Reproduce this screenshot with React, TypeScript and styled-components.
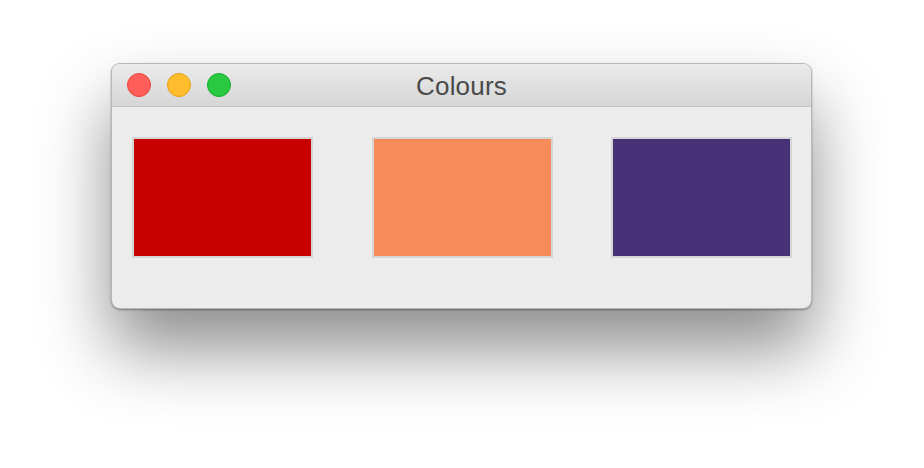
import styled, { createGlobalStyle } from "styled-components";

const GlobalStyle = createGlobalStyle`
  html, body {
    margin: 0;
    padding: 0;
    background: #ffffff;
  }
  body {
    font-family: "Liberation Sans", Arial, sans-serif;
  }
`;

const Desktop = styled.div`
  width: 924px;
  height: 468px;
  box-sizing: border-box;
  padding: 63px 0 0 111px;
  display: flex;
  align-items: flex-start;
`;

const Window = styled.div`
  width: 701px;
  border-radius: 9px;
  background: #ececec;
  border: 1px solid rgba(0, 0, 0, 0.22);
  box-sizing: border-box;
  overflow: hidden;
  box-shadow:
    0 1px 2px rgba(0, 0, 0, 0.35),
    0 40px 70px rgba(0, 0, 0, 0.45);
`;

const TitleBar = styled.div`
  position: relative;
  height: 43px;
  display: flex;
  align-items: center;
  justify-content: center;
  background: linear-gradient(#ebebeb, #d6d6d6);
  border-bottom: 1px solid #c2c2c2;
  box-sizing: border-box;
`;

const Lights = styled.div`
  position: absolute;
  left: 15px;
  top: 0;
  bottom: 0;
  display: flex;
  align-items: center;
  gap: 16px;
`;

const Light = styled.span<{ $fill: string; $edge: string }>`
  width: 24px;
  height: 24px;
  border-radius: 50%;
  box-sizing: border-box;
  background: ${p => p.$fill};
  border: 1px solid ${p => p.$edge};
`;

const Title = styled.div`
  font-size: 26px;
  color: #4a4a4a;
  letter-spacing: 0.2px;
  margin-top: 2px;
`;

const Content = styled.div`
  height: 201px;
  box-sizing: border-box;
  padding: 30px 19px 0 20px;
  display: flex;
  justify-content: space-between;
  align-items: flex-start;
`;

const Swatch = styled.div<{ $color: string }>`
  width: 181px;
  height: 121px;
  box-sizing: border-box;
  border: 2px solid #d5d5d5;
  background: ${p => p.$color};
`;

const swatches = ["#c80000", "#f78b59", "#473277"];

export default function App() {
  return (
    <>
      <GlobalStyle />
      <Desktop>
        <Window>
          <TitleBar>
            <Lights>
              <Light $fill="#ff5f58" $edge="#e2463f" />
              <Light $fill="#ffbd2e" $edge="#e1a116" />
              <Light $fill="#29c941" $edge="#14ad2a" />
            </Lights>
            <Title>Colours</Title>
          </TitleBar>
          <Content>
            {swatches.map(c => (
              <Swatch key={c} $color={c} />
            ))}
          </Content>
        </Window>
      </Desktop>
    </>
  );
}
